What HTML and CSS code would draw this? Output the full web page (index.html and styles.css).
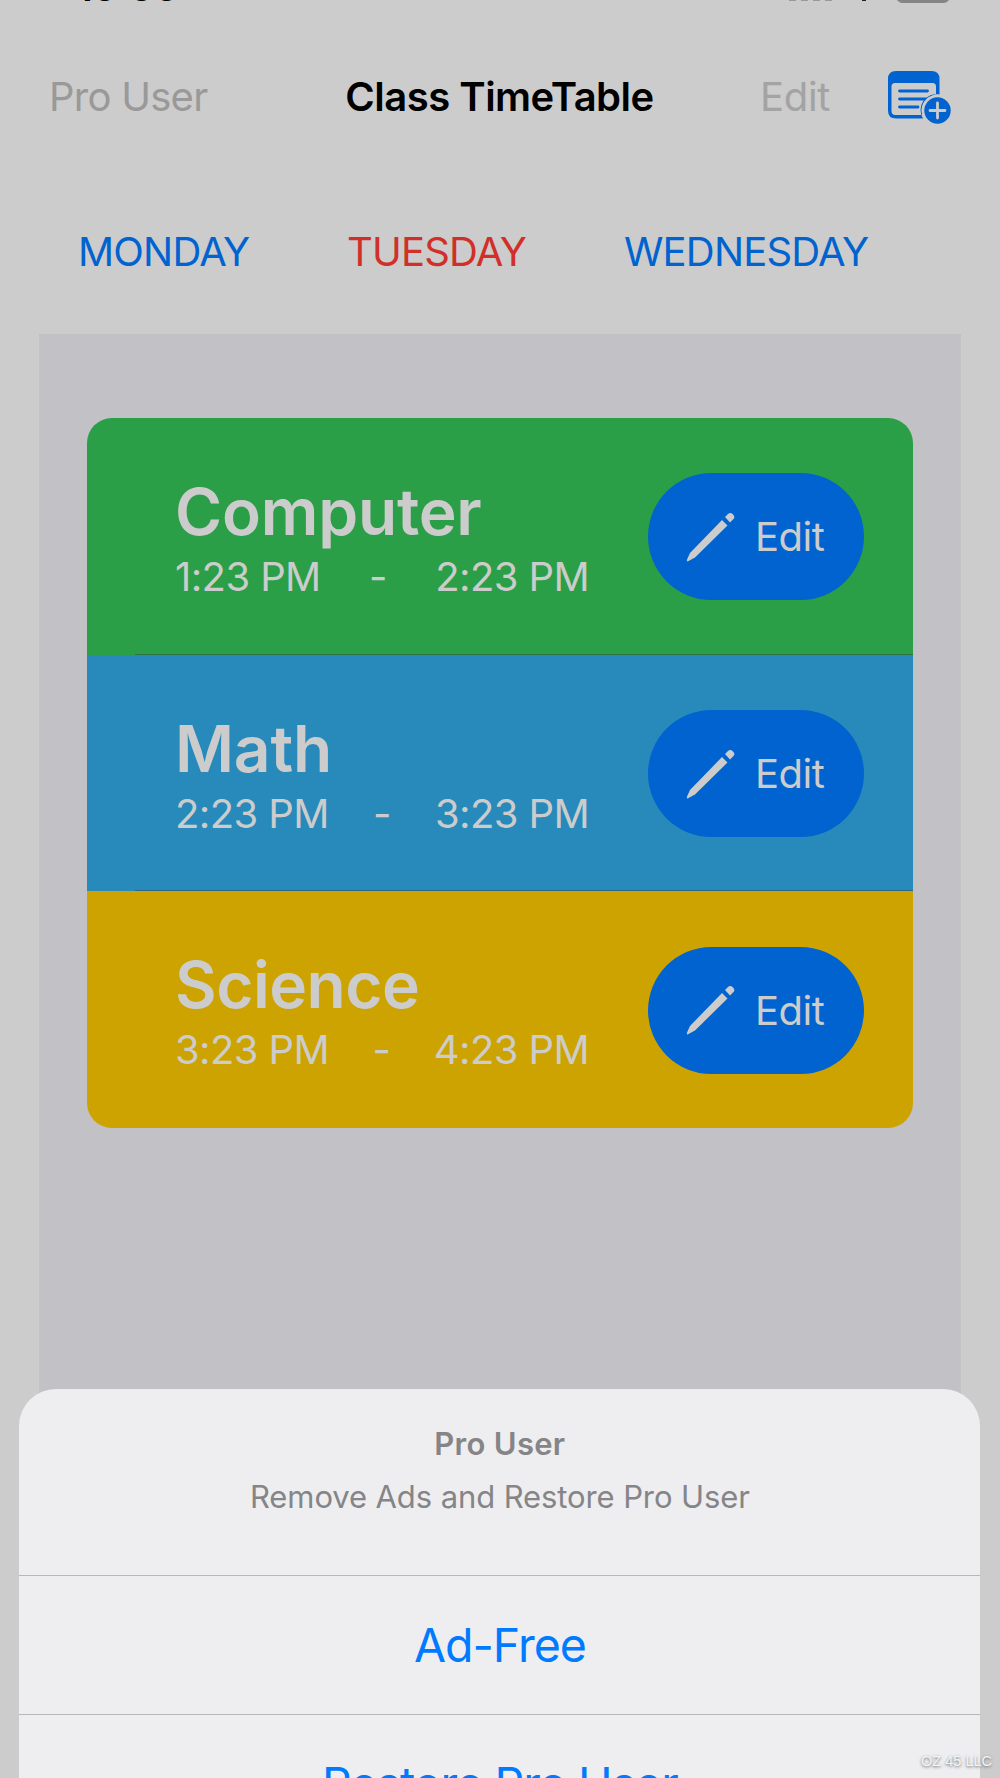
FILE: index.html
```html
<!DOCTYPE html>
<html lang="en">
<head>
<meta charset="UTF-8">
<title>Class TimeTable</title>
<link rel="stylesheet" href="styles.css">
</head>
<body>
	<div class="screen">
		<div class="status">
			<div class="clock">10<span class="colon">:</span>00</div>
			<div class="signal"><i></i><i></i><i></i><i></i></div>
			<div class="wifi"></div>
			<div class="battery"></div>
		</div>
		<div class="nav">
			<a class="pro">Pro User</a>
			<h1>Class TimeTable</h1>
			<div class="actions">
				<a class="edit">Edit</a>
				<svg class="add" width="64" height="54" viewBox="0 0 64 54">
					<path fill="#0063cf" fill-rule="evenodd" d="M8 0H43.500Q51.500 0 51.500 8V23.500A15.800 15.800 0 0 0 35 47.500H8Q0 47.500 0 39.500V8Q0 0 8 0ZM7 12Q3.500 12 3.500 15.500V40Q3.500 44 7.500 44H34.200A15.800 15.800 0 0 1 48 23.800V15.500Q48 12 44.500 12Z"/>
					<path stroke="#0063cf" stroke-width="2.800" stroke-linecap="round" d="M11.500 20H39.500M11.500 28H37.500M11.500 36H30"/>
					<circle cx="49.500" cy="39.500" r="15.800" fill="#ccc"/>
					<circle cx="49.500" cy="39.500" r="13.200" fill="#0063cf"/>
					<path stroke="#ccc" stroke-width="2.800" stroke-linecap="round" d="M49.500 32V47M42 39.500H57"/>
				</svg>
			</div>
		</div>
		<ul class="days">
			<li class="mon">MONDAY</li>
			<li class="tue active">TUESDAY</li>
			<li class="wed">WEDNESDAY</li>
		</ul>
		<div class="list">
			<div class="card">
				<div class="row green">
					<div class="info">
						<h2>Computer</h2>
						<p><span>1:23 PM</span><span>-</span><span>2:23 PM</span></p>
					</div>
					<a class="btn"><svg width="50" height="50" viewBox="0 0 50 50"><path fill="#ccc" d="M1.500 49.500Q.5 49 1 47.500L4 41L36 8L41.500 13.500L9 45.500L2.500 49ZM39 5L42 2Q44.500 0 47 2.500Q49.500 5 47.500 7L44 10.500Z"/></svg>Edit</a>
				</div>
				<div class="row blue">
					<div class="info">
						<h2>Math</h2>
						<p><span>2:23 PM</span><span>-</span><span>3:23 PM</span></p>
					</div>
					<a class="btn"><svg width="50" height="50" viewBox="0 0 50 50"><path fill="#ccc" d="M1.500 49.500Q.5 49 1 47.500L4 41L36 8L41.500 13.500L9 45.500L2.500 49ZM39 5L42 2Q44.500 0 47 2.500Q49.500 5 47.500 7L44 10.500Z"/></svg>Edit</a>
				</div>
				<div class="row yellow">
					<div class="info">
						<h2 class="science">Science</h2>
						<p><span>3:23 PM</span><span>-</span><span>4:23 PM</span></p>
					</div>
					<a class="btn"><svg width="50" height="50" viewBox="0 0 50 50"><path fill="#ccc" d="M1.500 49.500Q.5 49 1 47.500L4 41L36 8L41.500 13.500L9 45.500L2.500 49ZM39 5L42 2Q44.500 0 47 2.500Q49.500 5 47.500 7L44 10.500Z"/></svg>Edit</a>
				</div>
			</div>
		</div>
		<div class="sheet">
			<div class="sheet-head">
				<h3>Pro User</h3>
				<p>Remove Ads and Restore Pro User</p>
			</div>
			<a class="adfree">Ad-Free</a>
			<a class="restore">Restore Pro User</a>
		</div>
		<div class="mark">OZ 45 LLC</div>
	</div>
</body>
</html>
```
FILE: styles.css
```css
body {margin: 0;background-color: #ccc;font-family: Inter, "Liberation Sans", sans-serif;}
h1, h2, h3, p {margin: 0;}
ul {list-style: none;margin: 0;padding: 0;}
.screen {width: 1000px;height: 1778px;position: relative;overflow: hidden;font-size: 40px;display: flex;flex-direction: column;}

.status {height: 27px;display: flex;align-items: flex-start;}
.clock {width: 709px;margin: -41px 0 0 76px;font-size: 40px;line-height: 56px;font-weight: 600;color: #000;letter-spacing: -1.300px;}
.colon {position: relative;top: -5px;}
.signal {width: 73px;margin-left: 4px;display: flex;gap: 5px;}
.signal i {width: 7px;height: 1px;background-color: #999;}
.wifi {width: 4px;height: 1px;background-color: #222;}
.battery {width: 54px;height: 13px;margin: -10px 0 0 30px;border-radius: 8px;background-color: #858585;}

.nav {height: 139px;padding: 0 48px 0 49px;display: grid;grid-template-columns: 260px 1fr 260px;align-items: center;}
.nav .pro {color: #999;letter-spacing: -.75px;}
.nav h1 {margin-left: -2px;font-size: 40px;font-weight: 600;text-align: center;color: #000;letter-spacing: -.5px;white-space: nowrap;}
.actions {display: flex;justify-content: flex-end;align-items: center;}
.actions .edit {color: #a3a3a3;width: 128px;letter-spacing: -.3px;}
.actions .add {display: block;margin-top: 3px;}

.days {height: 165px;padding: 3px 0 0 78px;box-sizing: border-box;display: flex;align-items: center;color: #0063cf;letter-spacing: -.8px;}
.days .mon {width: 269px;}
.days .tue {width: 277px;}
.days .active {color: #d03029;}
.nav + .days {height: 168px;}

.list {margin: 0 39px;padding: 84px 48px 0;flex: 1;background-color: #c2c1c6;}
.card {border-radius: 25px;overflow: hidden;color: #ccc;}
.row {height: 236.700px;padding: 0 49px 0 87px;box-sizing: border-box;display: flex;align-items: center;justify-content: space-between;position: relative;}
.row + .row::before {content: "";height: 1px;background-color: rgba(50,50,55,.4);position: absolute;top: -1px;left: 48px;right: 0;}
.green {background-color: #2a9f47;}
.blue {background-color: #288abb;}
.yellow {background-color: #cca300;}
.info {width: 414px;padding: 4px 0 0 1px;}
.info h2 {font-size: 64px;line-height: 76px;font-weight: 600;letter-spacing: -.2px;}
.info .science {letter-spacing: -.5px;}
.info p {line-height: 53px;display: flex;justify-content: space-between;letter-spacing: -.6px;}
.btn {width: 216px;height: 127px;margin-top: 1px;padding-left: 38px;box-sizing: border-box;border-radius: 64px;background-color: #0063cf;display: flex;align-items: center;gap: 19px;letter-spacing: -.5px;}

.sheet {width: 961px;height: 480px;border-radius: 37px;overflow: hidden;background-color: #eeeef0;position: absolute;left: 19.400px;top: 1389px;text-align: center;}
.sheet-head {height: 186px;padding-top: 27.500px;box-sizing: border-box;font-size: 31px;line-height: 53px;letter-spacing: -.1px;color: #858587;}
.sheet-head h3 {font-size: 31px;font-weight: 600;letter-spacing: .3px;}
.sheet a {height: 138.500px;line-height: 138px;border-top: 1px solid #b7b7ba;box-sizing: border-box;display: block;font-size: 46.500px;letter-spacing: -1px;color: #007aff;}

.mark {position: absolute;right: 8px;bottom: 8px;font-family: "Liberation Sans", sans-serif;font-size: 14.500px;line-height: 18px;color: #f4f4f4;text-shadow: 0 1px 3px #666;}
```
